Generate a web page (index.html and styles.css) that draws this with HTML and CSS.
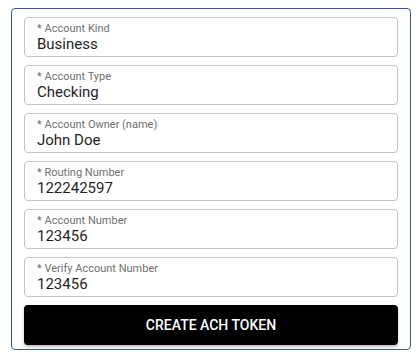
FILE: index.html
```html
<!DOCTYPE html>
<html lang="en">
<head>
  <meta charset="UTF-8" />
  <meta name="viewport" content="width=device-width, initial-scale=1.0" />
  <title>ACH Token</title>
  <link rel="stylesheet" href="styles.css">
</head>
<body>
  <form class="ach-card">
    <label class="field">
      <span class="field-label">* Account Kind</span>
      <input class="field-input" type="text" value="Business" />
    </label>
    <label class="field">
      <span class="field-label">* Account Type</span>
      <input class="field-input" type="text" value="Checking" />
    </label>
    <label class="field">
      <span class="field-label">* Account Owner (name)</span>
      <input class="field-input" type="text" value="John Doe" />
    </label>
    <label class="field">
      <span class="field-label">* Routing Number</span>
      <input class="field-input" type="text" value="122242597" />
    </label>
    <label class="field">
      <span class="field-label">* Account Number</span>
      <input class="field-input" type="text" value="123456" />
    </label>
    <label class="field">
      <span class="field-label">* Verify Account Number</span>
      <input class="field-input" type="text" value="123456" />
    </label>

    <button class="submit-btn" type="button">Create ACH Token</button>
  </form>
</body>
</html>
```

FILE: styles.css
```css
* {
  box-sizing: border-box;
  margin: 0;
  padding: 0;
  font-family: Roboto, 'Liberation Sans', sans-serif;
}

html, body {
  background: #fff;
}

body {
  padding: 8px 9px 0 11px;
}

.ach-card {
  width: 400px;
  display: flex;
  flex-direction: column;
  gap: 8px;
  padding: 8px 12px 4px 12px;
  border: 1px solid #3d5891;
  border-radius: 4px;
}

.field {
  display: flex;
  flex-direction: column;
  height: 40px;
  padding: 4px 12px 0;
  border: 1px solid #c4c4c4;
  border-radius: 4px;
  cursor: text;
}

.field-label {
  font-size: 11px;
  line-height: 13px;
  color: #707070;
}

.field-input {
  border: none;
  outline: none;
  background: transparent;
  font-size: 15px;
  line-height: 18px;
  height: 18px;
  color: #1f1f1f;
}

.submit-btn {
  height: 40px;
  border: none;
  border-radius: 4px;
  background: #000;
  color: #fff;
  font-size: 14px;
  font-weight: 500;
  text-transform: uppercase;
  letter-spacing: 0;
  box-shadow: 0 2px 3px rgba(0, 0, 0, 0.25);
  cursor: pointer;
}
```
